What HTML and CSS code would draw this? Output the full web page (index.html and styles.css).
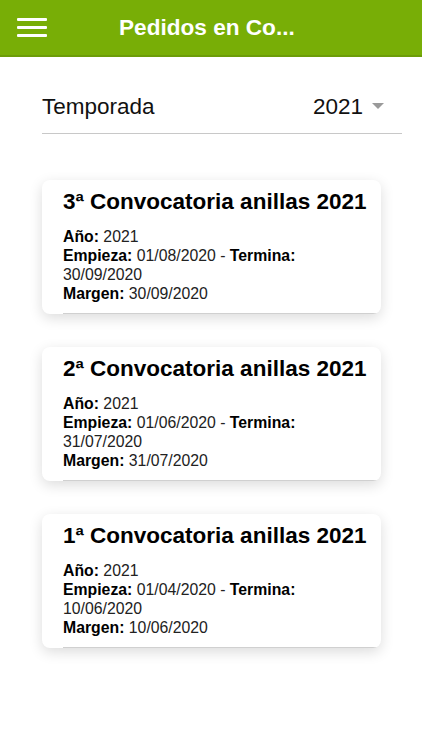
FILE: index.html
```html
<!DOCTYPE html>
<html lang="es">
  <head>
    <meta charset="UTF-8" />
    <meta name="viewport" content="width=device-width, initial-scale=1.0" />
    <title>Pedidos en Convocatoria</title>
    <link rel="stylesheet" href="styles.css">
  </head>
  <body>
    <header class="toolbar">
      <button class="menu-button" aria-label="Menú">
        <span></span>
        <span></span>
        <span></span>
      </button>
      <h1 class="toolbar-title">Pedidos en Co...</h1>
    </header>

    <main class="content">
      <div class="season-select">
        <span class="season-label">Temporada</span>
        <span class="season-value">2021</span>
        <span class="season-arrow"></span>
      </div>

      <div class="card">
        <div class="card-item">
          <h2>3ª Convocatoria anillas 2021</h2>
          <p><b>Año:</b> 2021<br>
            <b>Empieza:</b> 01/08/2020 - <b>Termina:</b> 30/09/2020<br>
            <b>Margen:</b> 30/09/2020</p>
        </div>
      </div>

      <div class="card">
        <div class="card-item">
          <h2>2ª Convocatoria anillas 2021</h2>
          <p><b>Año:</b> 2021<br>
            <b>Empieza:</b> 01/06/2020 - <b>Termina:</b> 31/07/2020<br>
            <b>Margen:</b> 31/07/2020</p>
        </div>
      </div>

      <div class="card">
        <div class="card-item">
          <h2>1ª Convocatoria anillas 2021</h2>
          <p><b>Año:</b> 2021<br>
            <b>Empieza:</b> 01/04/2020 - <b>Termina:</b> 10/06/2020<br>
            <b>Margen:</b> 10/06/2020</p>
        </div>
      </div>
    </main>
  </body>
</html>
```

FILE: styles.css
```css
body {
  margin: 0;
  font-family: "Liberation Sans", Arial, sans-serif;
  background: #fff;
  color: #000;
}

.toolbar {
  display: flex;
  align-items: center;
  height: 57px;
  background-color: #78ae06;
  border-bottom: 2px solid #6c9c08;
  box-sizing: border-box;
}

.menu-button {
  display: flex;
  flex-direction: column;
  gap: 5px;
  width: 64px;
  padding: 0 0 0 17px;
  background: none;
  border: none;
  cursor: pointer;
}

.menu-button span {
  display: block;
  width: 30px;
  height: 3px;
  background: #fff;
  border-radius: 1px;
}

.toolbar-title {
  margin: 0 0 0 55px;
  color: #fff;
  font-size: 22.6px;
  font-weight: bold;
}

.content {
  padding: 37px 20px 40px 42px;
}

.season-select {
  display: flex;
  align-items: center;
  height: 26px;
  padding-bottom: 13px;
  border-bottom: 1px solid #c8c8c8;
  font-size: 22.5px;
  color: #111;
}

.season-label {
  flex: 1;
}

.season-arrow {
  width: 0;
  height: 0;
  margin: 0 18px 2px 9px;
  border-left: 6px solid transparent;
  border-right: 6px solid transparent;
  border-top: 6px solid #9a9a9a;
}

.card {
  width: 339px;
  margin-top: 46px;
  background: #fff;
  border-radius: 8px;
  box-shadow: 0 4px 14px rgba(0, 0, 0, 0.14);
  overflow: hidden;
}

.card + .card {
  margin-top: 33px;
}

.card-item {
  margin-left: 21px;
  padding: 9px 42px 10px 0;
  border-bottom: 1px solid #d0d0d0;
}

.card-item h2 {
  margin: 0 -40px 12px 0;
  font-size: 22.5px;
  line-height: 26px;
  font-weight: bold;
  white-space: nowrap;
}

.card-item p {
  margin: 0;
  font-size: 15.8px;
  line-height: 19px;
  color: #222;
}

.card-item b {
  color: #000;
}
```
